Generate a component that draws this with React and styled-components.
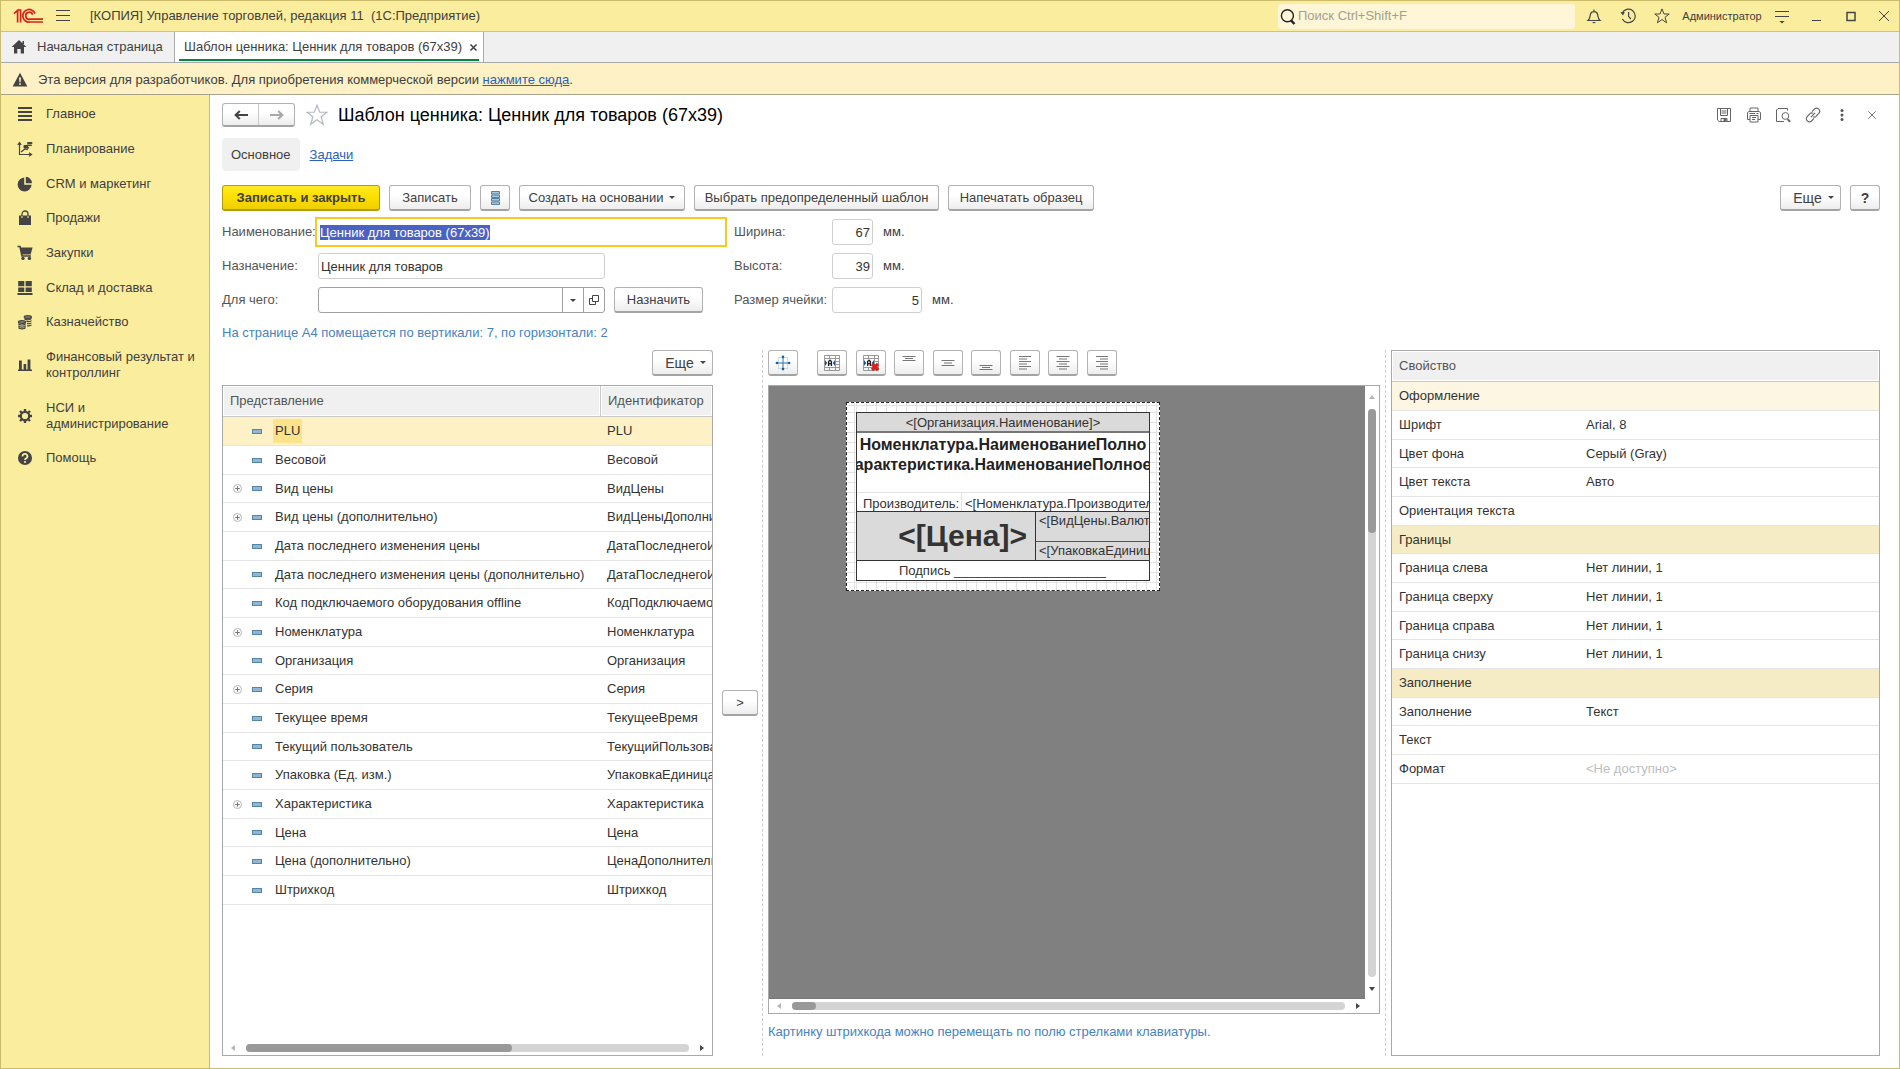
import React, { useEffect, useRef } from "react";
import styled, { createGlobalStyle, css } from "styled-components";

const Global = createGlobalStyle`
  *, *::before, *::after { box-sizing: border-box; }
  html, body { margin: 0; }
  body, button, input, select, table {
    font-family: "Liberation Sans", Arial, sans-serif;
    font-size: 13px;
    line-height: 16px;
    color: #404040;
  }
  button { cursor: pointer; }
  svg { flex: none; }
  a { color: #2b62b8; }
`;

/* ---------- shared ---------- */

const plain = css`
  border: 0;
  background: none;
  padding: 0;
  margin: 0;
`;

const Window = styled.div`
  display: flex;
  flex-direction: column;
  min-height: 100vh;
  border: 1px solid #cbbc6c;
  background: #fff;
`;

const Btn = styled.button`
  display: inline-flex;
  align-items: center;
  justify-content: center;
  gap: 6px;
  height: 26px;
  width: ${(p) => (p.$w ? `${p.$w}px` : "auto")};
  padding: 0 0 0 ${(p) => (p.$more ? 6 : 0)}px;
  flex: none;
  white-space: nowrap;
  border: 1px solid #b2b2b2;
  border-bottom: 2px solid #a3a3a3;
  border-radius: 3px;
  background: linear-gradient(#fff 40%, #ededed);
  color: #404040;
  font-size: ${(p) => (p.$large ? 14 : 13)}px;
  font-weight: ${(p) => (p.$bold ? 700 : 400)};
  ${(p) =>
    p.$primary &&
    css`
      border-color: #b09c10;
      background: linear-gradient(#ffe924, #fde000 45%, #efcf00);
      font-weight: 700;
    `}
`;

const Caret = styled.span`
  border: 3px solid transparent;
  border-top-color: #444;
  border-bottom: 0;
`;

/* ---------- title bar ---------- */

const TitleBar = styled.header`
  display: flex;
  align-items: center;
  gap: 4px;
  height: 31px;
  flex: none;
  padding-left: 12px;
  background: #fbed9e;
  border-bottom: 1px solid #d2c374;
`;

const AppName = styled.div`
  flex: 1;
  padding-left: 8px;
  white-space: pre;
`;

const Search = styled.label`
  display: flex;
  align-items: center;
  gap: 1px;
  width: 297px;
  height: 25px;
  padding-left: 2px;
  border-radius: 3px;
  background: #fef6d6;
`;

const SearchInput = styled.input`
  ${plain}
  flex: 1;
  min-width: 0;
  outline: 0;
  &::placeholder { color: #a3a08f; opacity: 1; }
`;

const BarButton = styled.button`
  ${plain}
  display: flex;
  align-items: center;
  justify-content: center;
  width: 30px;
  height: 28px;
`;

const UserButton = styled.button`
  ${plain}
  width: 82px;
  font-size: 11px;
  white-space: nowrap;
`;

/* ---------- tabs and banner ---------- */

const TabBar = styled.nav`
  display: flex;
  height: 31px;
  flex: none;
  background: #f0f0f0;
  border-bottom: 1px solid #a9a9a9;
`;

const HomeTab = styled.button`
  ${plain}
  display: flex;
  align-items: center;
  gap: 10px;
  width: 173px;
  padding-left: 10px;
`;

const ActiveTab = styled.div`
  display: flex;
  align-items: center;
  gap: 3px;
  padding: 0 2px 0 9px;
  border-left: 1px solid #a9a9a9;
  border-right: 1px solid #a9a9a9;
  background: linear-gradient(#00893d, #00893d) 4px 27px / calc(100% - 8px) 2px no-repeat #fff;
`;

const Banner = styled.div`
  display: flex;
  align-items: center;
  gap: 10px;
  height: 32px;
  flex: none;
  padding: 2px 0 0 11px;
  background: #fdf1c5;
  border-bottom: 1px solid #a9a38c;
`;

/* ---------- body ---------- */

const Body = styled.div`
  display: flex;
  flex: 1;
`;

const Sidebar = styled.nav`
  width: 209px;
  flex: none;
  padding-top: 2px;
  background: #fbed9e;
  border-right: 1px solid #cbbc6c;
`;

const SideItem = styled.button`
  ${plain}
  display: flex;
  align-items: center;
  gap: 13px;
  width: 100%;
  padding: 9px 6px 10px 16px;
  text-align: left;
  &:nth-child(3n) { padding-bottom: 9px; }
`;

const SideLabel = styled.span`
  max-width: 150px;
`;

const Content = styled.main`
  display: flex;
  flex-direction: column;
  flex: 1;
  min-width: 0;
  padding: 8px 19px 12px 12px;
`;

const HeadRow = styled.div`
  display: flex;
  align-items: center;
  height: 24px;
`;

const NavPair = styled.div`
  display: flex;
  width: 73px;
  height: 24px;
  border: 1px solid #b2b2b2;
  border-bottom: 2px solid #a3a3a3;
  border-radius: 3px;
  background: linear-gradient(#fff 40%, #ededed);
`;

const NavButton = styled.button`
  ${plain}
  display: flex;
  flex: 1;
  align-items: center;
  justify-content: center;
  & + & { border-left: 1px solid #c9c9c9; }
`;

const StarButton = styled.button`
  ${plain}
  display: flex;
  margin: 0 10px 0 11px;
`;

const Title = styled.h1`
  flex: 1;
  margin: 0;
  font-size: 18px;
  line-height: 24px;
  font-weight: 400;
  color: #000;
`;

const HeadTools = styled.div`
  display: flex;
  align-items: center;
  justify-content: space-between;
  width: 164px;
`;

const ToolIcon = styled.button`
  ${plain}
  display: flex;
  width: 16px;
  justify-content: center;
`;

const Pages = styled.nav`
  display: flex;
  align-items: center;
  gap: 10px;
  margin-top: 11px;
`;

const PageCurrent = styled.span`
  padding: 9px 9px 8px;
  border-radius: 4px;
  background: #f0f0f0;
`;

const Commands = styled.div`
  display: flex;
  gap: 9px;
  margin-top: 14px;
`;

const Spacer = styled.div`
  flex: 1;
`;

const Form = styled.div`
  display: flex;
  gap: 7px;
  margin-top: 6px;
`;

const FormColumn = styled.div`
  display: flex;
  flex-direction: column;
  gap: 4px;
`;

const Field = styled.div`
  display: flex;
  align-items: center;
  height: 30px;
`;

const Label = styled.label`
  width: ${(p) => p.$w}px;
  flex: none;
  color: #555;
  white-space: nowrap;
`;

const box = css`
  height: 26px;
  border: 1px solid #cfcfcf;
  border-radius: 3px;
  background: #fff;
  outline: 0;
`;

const TextInput = styled.input`
  ${box}
  width: ${(p) => p.$w}px;
  margin: 0 3px;
  padding: 0 2px;
  color: #333;
  text-align: ${(p) => (p.$num ? "right" : "left")};
`;

const FocusInput = styled.input`
  width: 412px;
  height: 30px;
  padding: 0 3px;
  border: 2px solid #fac81e;
  outline: 0;
  background: #fff;
  &::selection { background: #4a62c4; color: #fff; }
`;

const Combo = styled.div`
  ${box}
  display: flex;
  width: 287px;
  margin: 0 9px 0 3px;
  border-color: #a0a0a0;
`;

const ComboInput = styled.input`
  ${plain}
  flex: 1;
  min-width: 0;
  padding: 0 2px;
  outline: 0;
`;

const ComboButton = styled.button`
  ${plain}
  display: flex;
  align-items: center;
  justify-content: center;
  width: 21px;
  border-left: 1px solid #a0a0a0;
`;

const Unit = styled.span`
  padding-left: 7px;
`;

const Note = styled.p`
  margin: 10px 0 ${(p) => (p.$bottom ? 16 : 0)}px;
  color: #4583c4;
`;

/* ---------- work area ---------- */

const Work = styled.div`
  display: grid;
  grid-template-columns: minmax(0, 491fr) 55px minmax(0, 612fr) 11px minmax(0, 489fr);
  flex: 1;
  margin-top: 9px;
`;

const Pane = styled.section`
  display: flex;
  flex-direction: column;
  min-width: 0;
`;

const PaneBar = styled.div`
  display: flex;
  justify-content: ${(p) => (p.$end ? "flex-end" : "flex-start")};
  gap: 19px;
  height: 26px;
  margin-bottom: 9px;
`;

const FormatGroup = styled.div`
  display: flex;
  justify-content: space-between;
  width: 300px;
`;

const Frame = styled.div`
  display: flex;
  flex-direction: column;
  flex: 1;
  min-width: 0;
  overflow: hidden;
  border: 1px solid #a9a9a9;
`;

const Grow = styled.div`
  flex: 1;
  min-width: 0;
`;

const Table = styled.table`
  table-layout: fixed;
  width: 100%;
  border-collapse: separate;
  border-spacing: 0;
  th, td {
    padding: 0 0 0 7px;
    overflow: hidden;
    text-align: left;
    font-weight: 400;
    white-space: nowrap;
    border-bottom: 1px solid #e4e4e4;
  }
`;

const HeadTr = styled.tr`
  height: 31px;
  th {
    color: #555;
    background: #f0f0f0;
    border-bottom: 1px solid #c9c9c9;
    box-shadow: inset 0 0 0 1px #fff;
  }
  th + th { border-left: 1px solid #c9c9c9; }
`;

const Tr = styled.tr`
  height: 29px;
  background: ${(p) => p.$bg || "#fff"};
  color: #333;
  &:nth-child(3n) { height: 28px; }
`;

const Tree = styled.div`
  display: flex;
  align-items: center;
`;

const Expander = styled.span`
  display: flex;
  width: 22px;
  padding-left: 3px;
`;

const ExpandButton = styled.button`
  ${plain}
  display: flex;
`;

const Dash = styled.span`
  width: 10px;
  height: 5px;
  margin-right: 11px;
  border: 1px solid #5585a6;
  background: #8fb6d2;
`;

const Name = styled.span`
  padding: 4px 2px;
  background: ${(p) => (p.$on ? "#fde48c" : "transparent")};
`;

const Gray = styled.td`
  color: ${(p) => (p.$dim ? "#bdbdbd" : "inherit")};
`;

const HScroll = styled.div`
  display: flex;
  align-items: center;
  gap: 11px;
  height: 14px;
  padding: 0 8px;
  background: #fff;
`;

const VScroll = styled.div`
  display: flex;
  flex-direction: column;
  align-items: center;
  gap: 10px;
  width: 14px;
  padding: 9px 0 8px;
  background: #fff;
`;

const Arrow = styled.span`
  border: 3px solid transparent;
  ${(p) => {
    const side = { left: "right", right: "left", up: "bottom", down: "top" }[p.$to];
    const back = p.$to === "up" ? "top" : p.$to === "down" ? "bottom" : p.$to;
    return css`
      border-${side}: 4px solid ${p.$off ? "#b5b5b5" : "#444"};
      border-${back}: 0;
    `;
  }}
`;

const Track = styled.div`
  flex: 1;
  border-radius: 4px;
  background: #d4d4d4;
  ${(p) => (p.$vertical ? "width: 8px;" : "height: 8px;")}
`;

const Thumb = styled.div`
  border-radius: 4px;
  background: #999;
  ${(p) => (p.$vertical ? `height: ${p.$size}; width: 8px;` : `width: ${p.$size}; height: 8px;`)}
`;

const Divider = styled.div`
  display: flex;
  align-items: center;
  justify-content: flex-end;
  gap: 4px;
  padding-right: 5px;
`;

const DashLine = styled.div`
  align-self: stretch;
  border-left: 1px dashed #cfcfcf;
`;

/* ---------- label canvas ---------- */

const CanvasRow = styled.div`
  display: flex;
  flex: 1;
`;

const Canvas = styled.div`
  flex: 1;
  min-width: 0;
  padding: 16px 0 0 77px;
  background: #808080;
  border-bottom: 1px solid #777;
`;

const Sheet = styled.div`
  width: 314px;
  padding: 9px;
  border: 1px dashed #222;
  background:
    repeating-linear-gradient(90deg, #e2e2e2 0 1px, transparent 1px 10px) 9px 0,
    repeating-linear-gradient(#e2e2e2 0 1px, transparent 1px 10px) 0 9px,
    #fff;
`;

const Tag = styled.div`
  border: 1px solid #333;
  background: #fff;
  color: #333;
`;

const TagOrg = styled.div`
  height: 20px;
  line-height: 20px;
  text-align: center;
  background: #dadada;
  border-bottom: 2px solid #777;
`;

const TagNames = styled.div`
  display: flex;
  flex-direction: column;
  align-items: center;
  height: 59px;
  overflow: hidden;
  font-size: 16px;
  line-height: 20px;
  padding-top: 2px;
  font-weight: 700;
  color: #222;
  white-space: nowrap;
`;

const TagMaker = styled.div`
  display: grid;
  grid-template-columns: 104px minmax(0, 1fr);
  height: 20px;
  line-height: 22px;
  border-top: 1px solid #e2e2e2;
  border-bottom: 1px solid #333;
`;

const MakerCell = styled.div`
  overflow: hidden;
  white-space: nowrap;
  padding-left: ${(p) => (p.$value ? 3 : 6)}px;
  border-left: ${(p) => (p.$value ? "1px solid #e2e2e2" : "0")};
`;

const TagPrice = styled.div`
  display: grid;
  grid-template-columns: 178px minmax(0, 1fr);
  height: 49px;
  background: #dadada;
  border-bottom: 1px solid #333;
`;

const Price = styled.div`
  padding-right: 8px;
  text-align: right;
  font-size: 30px;
  line-height: 48px;
  font-weight: 700;
`;

const PriceSide = styled.div`
  border-left: 1px solid #333;
`;

const SideCell = styled.div`
  height: ${(p) => p.$h}px;
  padding-left: 3px;
  overflow: hidden;
  white-space: nowrap;
  line-height: 18px;
  border-bottom: ${(p) => (p.$line ? "1px solid #555" : "0")};
`;

const Signature = styled.div`
  height: 19px;
  padding-left: 42px;
  line-height: 19px;
  white-space: nowrap;
  overflow: hidden;
`;

/* ---------- icons ---------- */

const Svg = ({ w = 16, h = w, vb = `0 0 ${w} ${h}`, c = "#444", children, fill = "none", sw = 1 }) => (
  <svg width={w} height={h} viewBox={vb} fill={fill} stroke={c} strokeWidth={sw} aria-hidden="true">
    {children}
  </svg>
);

const Logo = () => (
  <Svg w={31} h={16} c="#d8201c" sw={1.7}>
    <path d="M1 5.6 L4.6 2.4 V14.5 M4.2 2 H7.6 V14.5" />
    <path d="M22 5.6 A6.3 6.3 0 1 0 17 14 H30" />
    <path d="M19.6 6.8 A3.5 3.5 0 1 0 17 11.2 H30" />
  </Svg>
);

const sideIcons = {
  main: (
    <Svg><path d="M1 2H15M1 6H15M1 10H15M1 14H15" strokeWidth="2" /></Svg>
  ),
  plan: (
    <Svg>
      <path d="M2.5 2V13.5H14M.8 4L2.5 1.5L4.2 4M12 11.8L14.5 13.5L12 15.2M4 11L8 8L10 8.5L12 6" strokeWidth="1.2" />
      <g fill="#444" stroke="none"><rect x="10" y="1" width="5.5" height="2" rx="1" /><rect x="9.5" y="3.4" width="5.5" height="1.6" rx=".8" /><rect x="6.5" y="4" width="4.5" height="3.4" rx="1" /></g>
    </Svg>
  ),
  pie: (
    <Svg fill="#444" c="none"><path d="M7.2 1.5V8.8H14.6A7 7 0 1 1 7.2 1.5Z" /><path d="M8.8 .8A6.6 6.6 0 0 1 15 7.2H8.8Z" /></Svg>
  ),
  bag: (
    <Svg><path d="M2 5.5H14V15H2Z" fill="#444" stroke="none" /><path d="M5 8V4A3 3 0 0 1 11 4V8" strokeWidth="1.3" /><path d="M5 6V8M11 6V8" stroke="#fbed9e" /></Svg>
  ),
  cart: (
    <Svg><path d="M.5 1.5H3L5 11H14" strokeWidth="1.6" /><path d="M3.4 2.5H15.6L13.6 9.6H5Z" fill="#444" stroke="none" /><circle cx="6" cy="13.4" r="1.7" fill="#444" stroke="none" /><circle cx="12.4" cy="13.4" r="1.7" fill="#444" stroke="none" /></Svg>
  ),
  store: (
    <Svg fill="#444" c="none"><path d="M1.2 1H7.3V6.3H1.2ZM8.6 1H14.8V6.3H8.6ZM1.2 7.4H7.3V12H1.2ZM8.6 7.4H14.8V12H8.6ZM.5 13H15.5V15H.5Z" /></Svg>
  ),
  coins: (
    <Svg sw={1.2}>
      <g fill="#777"><ellipse cx="5" cy="8" rx="3.6" ry="1.5" /><ellipse cx="10.8" cy="3" rx="3.6" ry="1.5" /></g>
      <path d="M1.5 9.5C2 11.5 8 11.5 8.5 9.5M1.5 11.6C2 13.5 8 13.5 8.5 11.6M1.5 13.4C2 15.3 8 15.3 8.5 13.4M7.4 4.8C9 6.3 14 6 14.4 4.4M9.5 7.4C11.5 7.8 14 7.4 14.4 6.4M10 9.6C11.5 10 14 9.6 14.4 8.6M10 11.8C11.5 12 14 11.6 14.4 10.8" />
    </Svg>
  ),
  bars: (
    <Svg fill="#444" c="none"><path d="M1 12.5H15V14H1ZM2 3.5H4.8V12.5H2ZM6.6 7H9.2V12.5H6.6ZM10.6 2.5H13.4V12.5H10.6Z" /></Svg>
  ),
  gear: (
    <Svg><circle cx="8" cy="8" r="4.2" strokeWidth="2.2" /><path d="M8 1V3M8 13V15M1 8H3M13 8H15M3 3L4.5 4.5M11.5 11.5L13 13M13 3L11.5 4.5M4.5 11.5L3 13" strokeWidth="2.4" /></Svg>
  ),
  help: (
    <Svg><circle cx="8" cy="8" r="7" fill="#444" stroke="none" /><path d="M5.6 6.4A2.4 2.3 0 1 1 9.2 8.2Q8 8.8 8 10" stroke="#fbed9e" strokeWidth="1.8" /><circle cx="8" cy="12" r="1.1" fill="#fbed9e" stroke="none" /></Svg>
  ),
};

const IconBurger = () => <Svg><path d="M1 2.5H15M1 7.5H15M1 12.5H15" /></Svg>;
const IconSearch = () => (
  <Svg w={17} c="#222" sw={1.4}><circle cx="7.4" cy="7.8" r="6" /><path d="M11 12.4L14.5 16" strokeWidth="2.4" /></Svg>
);
const IconBell = () => (
  <Svg><path d="M2 12.5H14C12 10.8 12 9 11.6 6.4A3.7 3.7 0 0 0 4.4 6.4C4 9 4 10.8 2 12.5ZM8 3.2V1.4" strokeWidth="1.2" /><path d="M6 14H10L8 15.6Z" fill="#444" stroke="none" /></Svg>
);
const IconHistory = () => (
  <Svg sw={1.2}><path d="M2.2 5.2A6.8 6.8 0 1 1 2.4 11M8.6 4V8.4L10.8 11" /><path d="M.4 4.2L4.8 4L3 7.6Z" fill="#444" stroke="none" /></Svg>
);
const STAR = "M8 .9L10 6H15.2L11 9.3L12.6 14.8L8 11.5L3.4 14.8L5 9.3L.8 6H6Z";
const IconStar = ({ w = 16, c = "#444", sw }) => <Svg w={w} vb="0 0 16 16" c={c} sw={sw}><path d={STAR} /></Svg>;
const IconMenu = () => (
  <Svg><path d="M1 3.5H15M1 8.5H15" /><path d="M5.4 13H10.6L8 15.4Z" fill="#444" stroke="none" /></Svg>
);
const IconMin = () => <Svg><path d="M4 12.5H13" /></Svg>;
const IconMax = () => <Svg><path d="M5 4.5H13V12.5H5Z" strokeWidth="1.5" /></Svg>;
const IconClose = ({ w = 16 }) => <Svg w={w} vb="0 0 16 16"><path d="M3 3L13 13M13 3L3 13" /></Svg>;
const IconHome = () => (
  <Svg fill="#444" c="none"><path d="M8 1L15.4 8H13V14.5H9.7V10H6.3V14.5H3V8H.6ZM11.5 2H13V5H11.5Z" /></Svg>
);
const IconWarn = () => (
  <Svg fill="#444" c="none"><path d="M8 .8L15.4 14.5H.6Z" /><path d="M7 5.5H9L8.6 10.2H7.4ZM7.1 11.2H8.9V12.8H7.1Z" fill="#fdf1c5" /></Svg>
);
const IconArrow = ({ back }) => (
  <Svg c={back ? "#444" : "#a8a8a8"} sw={2}>
    <path d={back ? "M15 8H3M6.8 4L2.6 8L6.8 12" : "M1 8H13M9.2 4L13.4 8L9.2 12"} />
  </Svg>
);
const gray = "#666";
const IconSave = () => (
  <Svg c={gray}><path d="M1.5 1.5H14.5V14.5H3.2L1.5 13ZM4.5 1.5V8.5H11.5V1.5M5.5 4H10.5M5.5 6H10.5M5 14.5V11.5H11V14.5" /><path d="M8 12H10V14.5H8Z" fill={gray} /></Svg>
);
const IconPrint = () => (
  <Svg c={gray}><path d="M4 4.5V1H12V4.5M4 12.5H1.5V5.5L3 4.5H13L14.5 5.5V12.5H12M4 8.5H12V15H4ZM6 10.5H10M6 12.5H9M10.5 6.5H12.5M3.5 6.5H9" /></Svg>
);
const IconPreview = () => (
  <Svg c={gray}><path d="M12.5 3.5V1.5H3L1.5 3V14.5H9M12.5 12.2L15 14.8" /><path d="M12.8 12.4L15 14.8" strokeWidth="2" /><circle cx="10.4" cy="9" r="3.4" /></Svg>
);
const IconLink = () => (
  <Svg c={gray} sw={1.2}><path d="M7 4.6L9.4 2.2A2.6 2.6 0 0 1 13.8 6.4L11 9.4Q9.6 10.6 8 9.8M9 11.4L6.6 13.8A2.6 2.6 0 0 1 2.2 9.6L5 6.6Q6.4 5.4 8 6.2M5.8 10.2L10.2 5.8" /></Svg>
);
const IconDots = () => (
  <Svg c="none" fill="#555"><circle cx="8" cy="3.4" r="1.5" /><circle cx="8" cy="8" r="1.5" /><circle cx="8" cy="12.6" r="1.5" /></Svg>
);
const IconList = () => (
  <Svg c="#55809f"><path d="M4.5 1.5H12.5V4H4.5ZM4.5 5H12.5V7.5H4.5ZM4.5 8.5H12.5V11H4.5ZM4.5 12H12.5V14.5H4.5Z" fill="#a5c8e0" /></Svg>
);
const IconOpen = () => <Svg w={10}><path d="M3.5 .5H9.5V6.5H3.5ZM3.5 3.5H.5V9.5H6.5V6.5" /></Svg>;
const IconPlus = () => (
  <Svg w={9} c="#999"><circle cx="4.5" cy="4.5" r="4" stroke="#b5b5b5" /><path d="M2.2 4.5H6.8M4.5 2.2V6.8" stroke="#777" /></Svg>
);
const IconMove = () => (
  <Svg><path d="M3.5 2.5H12.5V13.5H3.5Z" stroke="#a9bccb" strokeDasharray="1 1" /><path d="M8 1.5V14.5M1.5 8H14.5" stroke="#2f77ae" /><g fill="#185f99" stroke="none"><circle cx="8" cy="1.9" r="1.3" /><circle cx="8" cy="14.1" r="1.3" /><circle cx="1.9" cy="8" r="1.3" /><circle cx="14.1" cy="8" r="1.3" /></g></Svg>
);
const IconMerge = ({ remove }) => (
  <Svg>
    <path d="M.5 .5H15.5V15.5H.5ZM.5 3.5H15.5M.5 12.5H15.5M5.5 .5V3.5M5.5 12.5V15.5M11.5 .5V15.5M11.5 6.5H15.5M11.5 9.5H15.5" stroke="#999" />
    <path d="M1 4H11V12H1Z" fill="#fff" stroke="none" />
    <path d="M1 5V11L3.2 8ZM11 5V11L8.8 8Z" fill="#1c4f86" stroke="none" />
    <path d="M4.6 11V6.6L6 5.2L7.4 6.6V11M4.6 8.6H7.4" stroke="#222" strokeWidth="1.4" />
    {remove && <path d="M9 9L15 15M15 9L9 15" stroke="#d8201c" strokeWidth="3.2" />}
  </Svg>
);
const lineSets = {
  top: "M1.5 1.5H14.5M4 3.5H12M1.5 5.5H14.5",
  middle: "M1.5 5.5H14.5M4 8H12M1.5 10.5H14.5",
  bottom: "M1.5 10.5H14.5M4 12.5H12M1.5 14.5H14.5",
  left: "M2 1.5H14M2 4H10M2 6.5H14M2 9H10M2 11.5H14M2 14H10",
  center: "M1.5 1.5H14.5M4 4H12M1.5 6.5H14.5M4 9H12M1.5 11.5H14.5M4 14H12",
  right: "M2 1.5H14M6 4H14M2 6.5H14M6 9H14M2 11.5H14M6 14H14",
};
const IconLines = ({ kind }) => <Svg c="#777"><path d={lineSets[kind]} /></Svg>;

/* ---------- data ---------- */

const sections = [
  ["main", "Главное"],
  ["plan", "Планирование"],
  ["pie", "CRM и маркетинг"],
  ["bag", "Продажи"],
  ["cart", "Закупки"],
  ["store", "Склад и доставка"],
  ["coins", "Казначейство"],
  ["bars", "Финансовый результат и контроллинг"],
  ["gear", "НСИ и администрирование"],
  ["help", "Помощь"],
];

const fields = [
  ["PLU", "PLU"],
  ["Весовой", "Весовой"],
  ["Вид цены", "ВидЦены", true],
  ["Вид цены (дополнительно)", "ВидЦеныДополнительно", true],
  ["Дата последнего изменения цены", "ДатаПоследнегоИзменения"],
  ["Дата последнего изменения цены (дополнительно)", "ДатаПоследнегоИзменения"],
  ["Код подключаемого оборудования offline", "КодПодключаемогоОборудования"],
  ["Номенклатура", "Номенклатура", true],
  ["Организация", "Организация"],
  ["Серия", "Серия", true],
  ["Текущее время", "ТекущееВремя"],
  ["Текущий пользователь", "ТекущийПользователь"],
  ["Упаковка (Ед. изм.)", "УпаковкаЕдиницаИзмерения"],
  ["Характеристика", "Характеристика", true],
  ["Цена", "Цена"],
  ["Цена (дополнительно)", "ЦенаДополнительно"],
  ["Штрихкод", "Штрихкод"],
];

const properties = [
  { name: "Оформление", bg: "#fcf6e2" },
  { name: "Шрифт", value: "Arial, 8" },
  { name: "Цвет фона", value: "Серый (Gray)" },
  { name: "Цвет текста", value: "Авто" },
  { name: "Ориентация текста", value: "" },
  { name: "Границы", bg: "#f5ebc4" },
  { name: "Граница слева", value: "Нет линии, 1" },
  { name: "Граница сверху", value: "Нет линии, 1" },
  { name: "Граница справа", value: "Нет линии, 1" },
  { name: "Граница снизу", value: "Нет линии, 1" },
  { name: "Заполнение", bg: "#f5ebc4" },
  { name: "Заполнение", value: "Текст" },
  { name: "Текст", value: "" },
  { name: "Формат", value: "<Не доступно>", dim: true },
];

const alignments = [
  ["top", "По верху"],
  ["middle", "По середине"],
  ["bottom", "По низу"],
  ["left", "По левому краю"],
  ["center", "По центру"],
  ["right", "По правому краю"],
];

/* ---------- parts ---------- */

const MoreButton = () => (
  <Btn type="button" $w={61} $large $more>
    <span>Еще</span>
    <Caret />
  </Btn>
);

function FieldsTable() {
  return (
    <Frame>
      <Grow>
        <Table>
          <colgroup>
            <col width="377" />
            <col />
          </colgroup>
          <thead>
            <HeadTr>
              <th scope="col">Представление</th>
              <th scope="col">Идентификатор</th>
            </HeadTr>
          </thead>
          <tbody>
            {fields.map(([name, id, group], i) => (
              <Tr key={name} $bg={i === 0 ? "#fdf1c5" : undefined}>
                <td>
                  <Tree>
                    <Expander>
                      {group && (
                        <ExpandButton type="button" aria-label="Развернуть">
                          <IconPlus />
                        </ExpandButton>
                      )}
                    </Expander>
                    <Dash />
                    <Name $on={i === 0}>{name}</Name>
                  </Tree>
                </td>
                <td>{id}</td>
              </Tr>
            ))}
          </tbody>
        </Table>
      </Grow>
      <HScroll>
        <Arrow $to="left" $off />
        <Track><Thumb $size="60%" /></Track>
        <Arrow $to="right" />
      </HScroll>
    </Frame>
  );
}

function PriceTag() {
  return (
    <Sheet>
      <Tag>
        <TagOrg>&lt;[Организация.Наименование]&gt;</TagOrg>
        <TagNames>
          <span>Номенклатура.НаименованиеПолно</span>
          <span>арактеристика.НаименованиеПолное</span>
        </TagNames>
        <TagMaker>
          <MakerCell>Производитель:</MakerCell>
          <MakerCell $value>&lt;[Номенклатура.Производитель]&gt;</MakerCell>
        </TagMaker>
        <TagPrice>
          <Price>&lt;[Цена]&gt;</Price>
          <PriceSide>
            <SideCell $h={30} $line>&lt;[ВидЦены.Валюта]&gt;</SideCell>
            <SideCell $h={18}>&lt;[УпаковкаЕдиница]&gt;</SideCell>
          </PriceSide>
        </TagPrice>
        <Signature>Подпись _____________________</Signature>
      </Tag>
    </Sheet>
  );
}

function Properties() {
  return (
    <Frame>
      <Table>
        <colgroup>
          <col width="187" />
          <col />
        </colgroup>
        <thead>
          <HeadTr>
            <th scope="col" colSpan={2}>Свойство</th>
          </HeadTr>
        </thead>
        <tbody>
          {properties.map((p, i) => (
            <Tr key={i} $bg={p.bg}>
              {p.bg ? (
                <td colSpan={2}>{p.name}</td>
              ) : (
                <>
                  <td>{p.name}</td>
                  <Gray $dim={p.dim}>{p.value}</Gray>
                </>
              )}
            </Tr>
          ))}
        </tbody>
      </Table>
    </Frame>
  );
}

export default function App() {
  const nameRef = useRef(null);
  useEffect(() => {
    nameRef.current.focus();
    nameRef.current.select();
  }, []);

  return (
    <>
      <Global />
      <Window>
        <TitleBar>
          <Logo />
          <BarButton type="button" aria-label="Меню"><IconBurger /></BarButton>
          <AppName>{"[КОПИЯ] Управление торговлей, редакция 11  (1С:Предприятие)"}</AppName>
          <Search>
            <IconSearch />
            <SearchInput type="text" aria-label="Поиск" placeholder="Поиск Ctrl+Shift+F" />
          </Search>
          <BarButton type="button" aria-label="Оповещения"><IconBell /></BarButton>
          <BarButton type="button" aria-label="История"><IconHistory /></BarButton>
          <BarButton type="button" aria-label="Избранное"><IconStar /></BarButton>
          <UserButton type="button">Администратор</UserButton>
          <BarButton type="button" aria-label="Настройки"><IconMenu /></BarButton>
          <BarButton type="button" aria-label="Свернуть"><IconMin /></BarButton>
          <BarButton type="button" aria-label="Развернуть"><IconMax /></BarButton>
          <BarButton type="button" aria-label="Закрыть"><IconClose /></BarButton>
        </TitleBar>

        <TabBar>
          <HomeTab type="button">
            <IconHome />
            <span>Начальная страница</span>
          </HomeTab>
          <ActiveTab>
            <span>Шаблон ценника: Ценник для товаров (67x39)</span>
            <ToolIcon type="button" aria-label="Закрыть вкладку">
              <Svg w={9} sw={1.6}><path d="M1.5 1.5L7.5 7.5M7.5 1.5L1.5 7.5" /></Svg>
            </ToolIcon>
          </ActiveTab>
        </TabBar>

        <Banner>
          <IconWarn />
          <span>
            Эта версия для разработчиков. Для приобретения коммерческой версии <a href="#buy">нажмите сюда</a>.
          </span>
        </Banner>

        <Body>
          <Sidebar>
            {sections.map(([icon, label]) => (
              <SideItem type="button" key={icon}>
                {sideIcons[icon]}
                <SideLabel>{label}</SideLabel>
              </SideItem>
            ))}
          </Sidebar>

          <Content>
            <HeadRow>
              <NavPair>
                <NavButton type="button" aria-label="Назад"><IconArrow back /></NavButton>
                <NavButton type="button" aria-label="Вперед"><IconArrow /></NavButton>
              </NavPair>
              <StarButton type="button" aria-label="В избранное"><IconStar w={22} c="#b4bac2" sw={0.9} /></StarButton>
              <Title>Шаблон ценника: Ценник для товаров (67x39)</Title>
              <HeadTools>
                <ToolIcon type="button" aria-label="Сохранить"><IconSave /></ToolIcon>
                <ToolIcon type="button" aria-label="Печать"><IconPrint /></ToolIcon>
                <ToolIcon type="button" aria-label="Просмотр"><IconPreview /></ToolIcon>
                <ToolIcon type="button" aria-label="Ссылка"><IconLink /></ToolIcon>
                <ToolIcon type="button" aria-label="Действия"><IconDots /></ToolIcon>
                <ToolIcon type="button" aria-label="Закрыть форму"><IconClose w={12} /></ToolIcon>
              </HeadTools>
            </HeadRow>

            <Pages>
              <PageCurrent>Основное</PageCurrent>
              <a href="#tasks">Задачи</a>
            </Pages>

            <Commands>
              <Btn type="button" $w={158} $primary>Записать и закрыть</Btn>
              <Btn type="button" $w={82}>Записать</Btn>
              <Btn type="button" $w={30} aria-label="Список"><IconList /></Btn>
              <Btn type="button" $w={166}><span>Создать на основании</span><Caret /></Btn>
              <Btn type="button" $w={245}>Выбрать предопределенный шаблон</Btn>
              <Btn type="button" $w={146}>Напечатать образец</Btn>
              <Spacer />
              <MoreButton />
              <Btn type="button" $w={30} $bold $large>?</Btn>
            </Commands>

            <Form>
              <FormColumn>
                <Field>
                  <Label $w={93} htmlFor="name">Наименование:</Label>
                  <FocusInput id="name" ref={nameRef} type="text" defaultValue="Ценник для товаров (67x39)" />
                </Field>
                <Field>
                  <Label $w={93} htmlFor="purpose">Назначение:</Label>
                  <TextInput id="purpose" type="text" $w={287} defaultValue="Ценник для товаров" />
                </Field>
                <Field>
                  <Label $w={93} htmlFor="target">Для чего:</Label>
                  <Combo>
                    <ComboInput id="target" type="text" />
                    <ComboButton type="button" aria-label="Выбрать"><Caret /></ComboButton>
                    <ComboButton type="button" aria-label="Открыть"><IconOpen /></ComboButton>
                  </Combo>
                  <Btn type="button" $w={89}>Назначить</Btn>
                </Field>
              </FormColumn>
              <FormColumn>
                <Field>
                  <Label $w={95} htmlFor="width">Ширина:</Label>
                  <TextInput id="width" type="text" $num $w={41} defaultValue="67" />
                  <Unit>мм.</Unit>
                </Field>
                <Field>
                  <Label $w={95} htmlFor="height">Высота:</Label>
                  <TextInput id="height" type="text" $num $w={41} defaultValue="39" />
                  <Unit>мм.</Unit>
                </Field>
                <Field>
                  <Label $w={95} htmlFor="cell">Размер ячейки:</Label>
                  <TextInput id="cell" type="text" $num $w={90} defaultValue="5" />
                  <Unit>мм.</Unit>
                </Field>
              </FormColumn>
            </Form>

            <Note>На странице А4 помещается по вертикали: 7, по горизонтали: 2</Note>

            <Work>
              <Pane>
                <PaneBar $end><MoreButton /></PaneBar>
                <FieldsTable />
              </Pane>

              <Divider>
                <Btn type="button" $w={36}>&gt;</Btn>
                <DashLine />
              </Divider>

              <Pane>
                <PaneBar>
                  <Btn type="button" $w={30} aria-label="Переместить"><IconMove /></Btn>
                  <FormatGroup>
                    <Btn type="button" $w={30} aria-label="Объединить"><IconMerge /></Btn>
                    <Btn type="button" $w={30} aria-label="Разъединить"><IconMerge remove /></Btn>
                    {alignments.map(([kind, label]) => (
                      <Btn type="button" $w={30} key={kind} aria-label={label}><IconLines kind={kind} /></Btn>
                    ))}
                  </FormatGroup>
                </PaneBar>
                <Frame>
                  <CanvasRow>
                    <Canvas><PriceTag /></Canvas>
                    <VScroll>
                      <Arrow $to="up" $off />
                      <Track $vertical><Thumb $vertical $size="124px" /></Track>
                      <Arrow $to="down" />
                    </VScroll>
                  </CanvasRow>
                  <HScroll>
                    <Arrow $to="left" $off />
                    <Track><Thumb $size="24px" /></Track>
                    <Arrow $to="right" />
                    <span />
                  </HScroll>
                </Frame>
                <Note $bottom>Картинку штрихкода можно перемещать по полю стрелками клавиатуры.</Note>
              </Pane>

              <Divider>
                <DashLine />
              </Divider>

              <Pane><Properties /></Pane>
            </Work>
          </Content>
        </Body>
      </Window>
    </>
  );
}
